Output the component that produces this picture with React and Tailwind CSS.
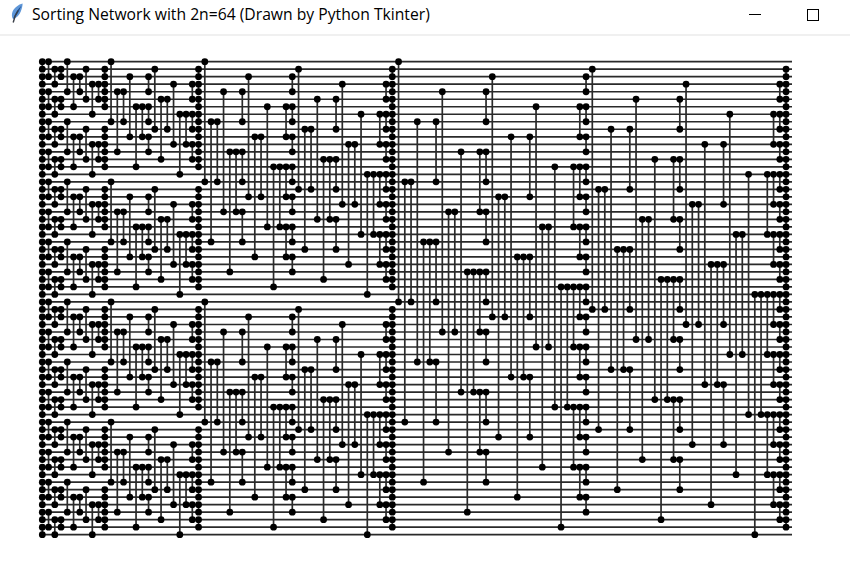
import React from 'react';

const N = 64;
const X0 = 42.3;
const DX = 6.25;
const Y0 = 61.7;
const DY = 7.508;

// batcher odd-even merge, every final pass shares one column
function merge(lo, hi, r, col, out) {
  const step = r * 2;
  if (step < hi - lo) {
    const a = merge(lo, hi, step, col, out);
    const b = merge(lo + r, hi, step, a, out);
    for (let i = lo + r; i < hi - r; i += step) out.push([i, i + r, b]);
    return b + 1;
  }
  out.push([lo, lo + r, col]);
  return col + 1;
}

function sort(lo, hi, col, out) {
  if (hi - lo < 1) return col;
  const mid = lo + Math.floor((hi - lo) / 2);
  const next = sort(lo, mid, col, out);
  sort(mid + 1, hi, col, out);
  return merge(lo, hi, 1, next, out);
}

const comparators = [];
sort(0, N - 1, 0, comparators);

function Feather() {
  return (
    <svg width="14" height="22" viewBox="0 0 14 22">
      <path d="M12.6 0.5C8.5 1.5 4.5 4.5 2.6 8.5C1.6 11 1.6 13.5 3 16C6.5 15 9.5 12 10.8 8.5C11.8 6 12.6 3 12.6 0.5Z" fill="#5f97d8" />
      <path d="M11.5 2.5C9.8 6 8.8 9 6.6 12C5.6 13.5 4.4 14.8 3 16C4.6 11.5 7.5 6.5 11.5 2.5Z" fill="#1f4f8f" />
      <path d="M8 7.5C5.8 11 4.2 14.5 3.2 19.5" stroke="#3a3f47" strokeWidth="1.4" fill="none" />
    </svg>
  );
}

function Network() {
  return (
    <svg width="850" height="539" viewBox="0 36 850 539" className="block">
      {Array.from({ length: N }, (_, i) => (
        <line key={i} x1="41" x2="792" y1={Y0 + i * DY} y2={Y0 + i * DY} stroke="#2a2a2a" strokeWidth="1.7" />
      ))}
      {comparators.map(([a, b, col], i) => {
        const x = X0 + col * DX;
        return (
          <g key={i}>
            <line x1={x} x2={x} y1={Y0 + a * DY} y2={Y0 + b * DY} stroke="#2a2a2a" strokeWidth="1.7" />
            <circle cx={x} cy={Y0 + a * DY} r="3.4" fill="#000" />
            <circle cx={x} cy={Y0 + b * DY} r="3.4" fill="#000" />
          </g>
        );
      })}
    </svg>
  );
}

export default function App() {
  return (
    <div className="w-[850px] h-[575px] bg-white overflow-hidden font-['Open_Sans',sans-serif]">
      <div className="h-[36px] border-b-2 border-[#f0f0f0] flex items-center">
        <div className="w-[32px] flex justify-center pl-[2px] pb-[6px]">
          <Feather />
        </div>
        <span className="text-[15.7px] leading-none text-black pb-[5px] flex-1">
          Sorting Network with 2n=64 (Drawn by Python Tkinter)
        </span>
        <div className="w-[12px] h-[1px] bg-black mr-[46px] mb-[5px]" />
        <div className="w-[12px] h-[12px] border border-black mr-[31px] mb-[4px]" />
      </div>
      <Network />
    </div>
  );
}
